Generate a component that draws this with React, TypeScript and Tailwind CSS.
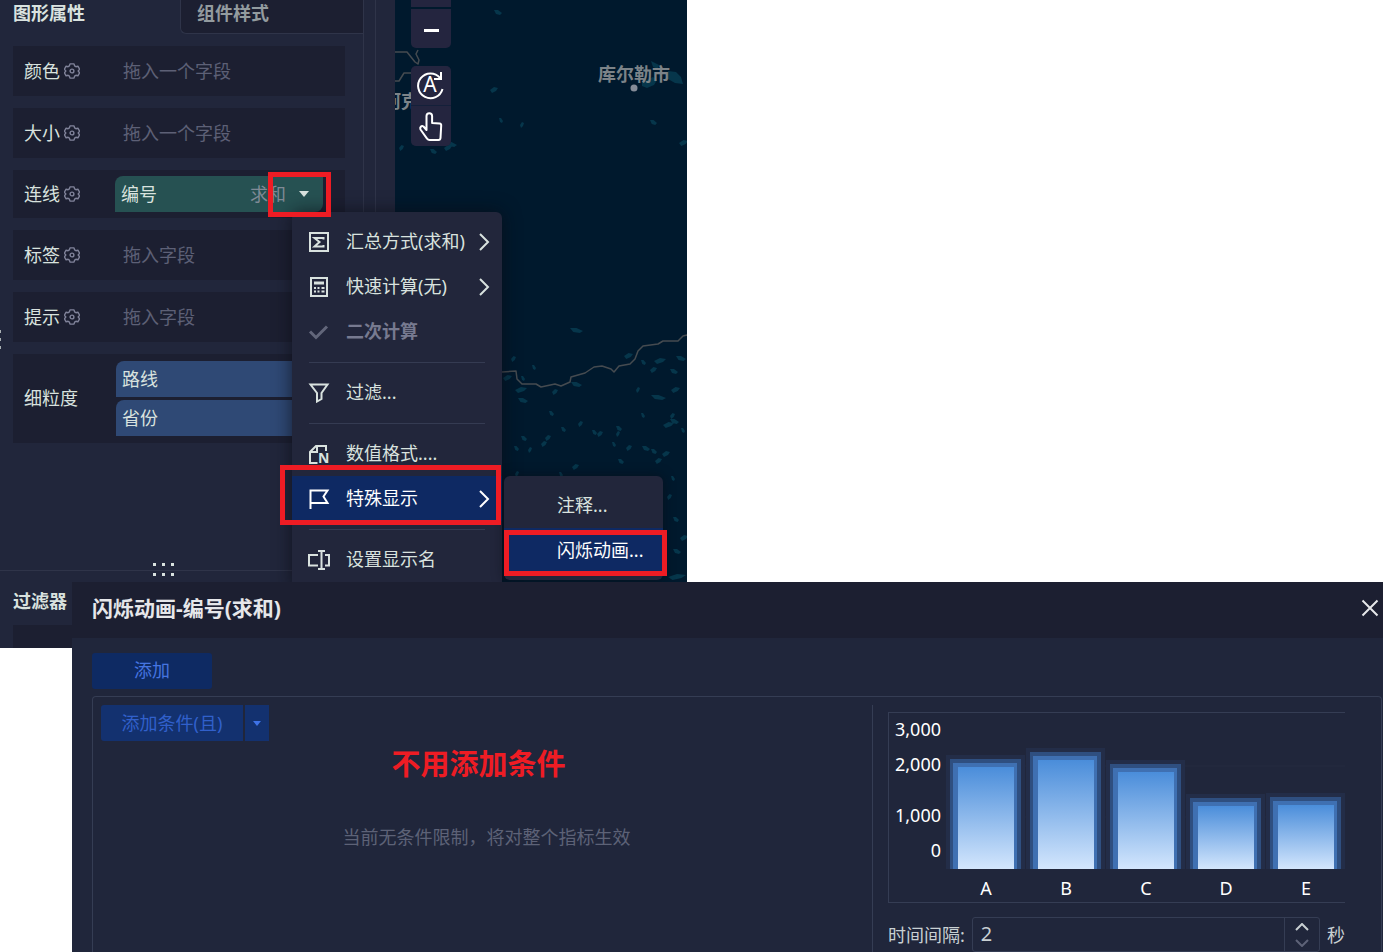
import type { ReactNode } from "react";

const shapeFields = [
  { label: "颜色", hint: "拖入一个字段" },
  { label: "大小", hint: "拖入一个字段" },
];

const textFields = [
  { label: "标签", hint: "拖入字段" },
  { label: "提示", hint: "拖入字段" },
];

const bars = [
  { name: "A", height: 102 },
  { name: "B", height: 109 },
  { name: "C", height: 97 },
  { name: "D", height: 63 },
  { name: "E", height: 64 },
];

const axisLabels = [
  { text: "3,000", y: 23 },
  { text: "2,000", y: 58 },
  { text: "1,000", y: 109 },
  { text: "0", y: 144 },
];

// small lakes scattered over the basin: x, y, width
const lakes = [
  [494, 12, 8], [490, 89, 8], [499, 120, 4], [520, 124, 4], [446, 144, 11],
  [444, 147, 8], [430, 151, 7], [399, 147, 5], [650, 122, 7], [679, 142, 9],
  [570, 330, 13], [511, 358, 5], [532, 367, 4], [503, 377, 9], [521, 378, 4],
  [515, 389, 12], [518, 400, 10], [552, 391, 6], [571, 384, 11], [624, 355, 9],
  [641, 362, 5], [654, 360, 12], [676, 358, 10], [650, 369, 7], [670, 371, 8],
  [636, 389, 4], [651, 397, 15], [671, 389, 9], [641, 415, 4], [663, 424, 11],
  [670, 421, 9], [670, 415, 5], [549, 413, 5], [578, 423, 5], [561, 429, 5],
  [545, 437, 6], [521, 438, 6], [541, 443, 6], [514, 448, 5], [528, 449, 4],
  [592, 432, 5], [597, 433, 6], [616, 428, 6], [616, 433, 4], [612, 444, 4],
  [626, 447, 6], [642, 448, 8], [662, 453, 8], [651, 451, 6], [655, 460, 7],
  [618, 461, 6], [572, 466, 7], [559, 474, 4], [515, 473, 4], [671, 478, 4],
  [667, 496, 5], [673, 519, 6], [680, 537, 8], [673, 551, 8], [668, 576, 18],
  [681, 430, 4],
];

const Gear = () => (
  <svg className="size-4 shrink-0" viewBox="0 0 16 16" fill="none" stroke="#80839a" strokeWidth="1.4" strokeLinejoin="round">
    <path d="M6 .9h4l.6 2 1.300.8 2-.5 1.700 2.900-1.400 1.900 1.400 1.900-1.700 2.900-2-.5-1.300.8-.6 2H6l-.6-2-1.300-.8-2 .5L.400 9.900 1.800 8 .400 6.100l1.700-2.900 2 .5 1.300-.8z" />
    <circle cx="8" cy="8" r="1.900" />
  </svg>
);

const Chevron = () => (
  <svg className="h-5 w-3 shrink-0" viewBox="0 0 12 20" fill="none" stroke="currentColor" strokeWidth="2">
    <path d="M2 2l8 8-8 8" />
  </svg>
);

const FieldCard = ({ label, gear = true, children }: { label: string; gear?: boolean; children: ReactNode }) => (
  <div className="grid grid-cols-[102px_1fr] items-center bg-[#1c1f31]">
    <div className="flex items-center gap-1 pb-px pl-[11px] text-[#d9e2df]">
      {label}
      {gear && <Gear />}
    </div>
    {children}
  </div>
);

const Hint = ({ text }: { text: string }) => (
  <div className="flex h-[50px] items-center pb-px pl-2 text-[#5d6076]">{text}</div>
);

const Frame = ({ className }: { className: string }) => (
  <div className={`pointer-events-none absolute border-[5px] border-[#ee1c24] ${className}`} />
);

const PropertyPanel = () => (
  <aside className="relative flex w-[363px] shrink-0 flex-col">
    <div className="flex h-[34px]">
      <button className="w-[180px] pb-2 pl-[13px] text-left leading-[26px] font-bold text-[#d9e2df]">图形属性</button>
      <button className="flex-1 rounded-bl-md border-b border-l border-[#2f3449] bg-[#1c1f31] pb-2 pl-4 text-left leading-[26px] font-bold text-[#939b9f]">
        组件样式
      </button>
    </div>
    <div className="flex flex-col gap-3 pt-3 pr-[18px] pl-[13px]">
      {shapeFields.map((f) => (
        <FieldCard key={f.label} label={f.label}>
          <Hint text={f.hint} />
        </FieldCard>
      ))}
      <FieldCard label="连线">
        <div className="my-1.5 mr-[22px] flex h-9 items-center rounded-tl-lg rounded-br-lg bg-[#265152] pr-[13px] pl-1.5 text-[#d9e2df]">
          <span className="flex-1">编号</span>
          <span className="text-[#7f8a96]">求和</span>
          <button className="ml-3 flex size-3 items-center justify-center" aria-label="编号选项">
            <svg className="h-1.5 w-2.5" viewBox="0 0 10 6" fill="currentColor">
              <path d="M0 0h10L5 6z" />
            </svg>
          </button>
        </div>
      </FieldCard>
      {textFields.map((f) => (
        <FieldCard key={f.label} label={f.label}>
          <Hint text={f.hint} />
        </FieldCard>
      ))}
      <FieldCard label="细粒度" gear={false}>
        <div className="my-[7px] mr-[21px] ml-px flex flex-col gap-[3px] text-[#d9e2df]">
          {["路线", "省份"].map((name) => (
            <div key={name} className="flex h-9 items-center rounded-tl-lg rounded-br-lg bg-[#2f4975] pl-1.5">
              {name}
            </div>
          ))}
        </div>
      </FieldCard>
    </div>
    <section className="relative mt-auto flex h-[78px] flex-col border-t border-[#2f3449] pl-[13px]">
      <div className="absolute -top-2 left-[153px] grid grid-cols-3 gap-x-[6px] gap-y-[7px] text-[#d9e2df]">
        {[0, 1, 2, 3, 4, 5].map((i) => (
          <i key={i} className="size-[3px] bg-current" />
        ))}
      </div>
      <h2 className="pt-[17px] leading-[26px] font-bold text-[#d9e2df]">过滤器</h2>
      <div className="mt-auto mr-[18px] h-[23px] bg-[#1c1f31]" />
    </section>
    <div className="absolute top-[330px] left-0 grid gap-[5px]">
      <i className="h-[3px] w-px bg-[#a9b0b3]" />
      <i className="h-[3px] w-px bg-[#a9b0b3]" />
      <i className="h-[3px] w-px bg-[#a9b0b3]" />
    </div>
  </aside>
);

const MapView = () => (
  <div className="relative flex-1 overflow-hidden bg-[#00192d]">
    <svg className="absolute inset-0 size-full" aria-hidden="true">
      <g transform="translate(-395 0)">
        <g fill="#06364b">
          {lakes.map(([x, y, w], i) => (
            <path
              key={i}
              d={
                i % 2
                  ? `M${x} ${y + 1}l${w / 2}-3 ${w / 2} 1-${w / 4} 3-${w / 2} 2z`
                  : `M${x} ${y - 2}l${w / 2} 0 ${w / 2} 3-${w / 4} 2-${w / 2}-1z`
              }
            />
          ))}
          <path d="M651 61l8 4-1 4-5-2zM668 71l8 1 5 5 2 7-8-1-7-4zM642 82l11-5 4 3-3 5-7 3-5-2z" />
        </g>
        <g fill="none" stroke="#454b50" strokeWidth="1.500" strokeLinejoin="round">
          <path d="M395 52h12l8 10 3 2 1-4-3-6 2-4M395 81h4l5-8h7" />
          <path d="M502 372l14-1 1 8 5 5h14l5 3 14-3 6 2 9-4 1-5 14-4 9-6 8-1 9 3 3 3 5-6 11-2 5-5 3-8 5-5 15-2 5-3h15l5-5 4-1 4 4" />
        </g>
        <g fill="#7c8388" fontSize="18" fontWeight="700">
          <text x="383" y="108">阿克</text>
          <text x="598" y="81">库尔勒市</text>
        </g>
        <circle cx="634" cy="88" r="3.500" fill="#858c98" />
      </g>
    </svg>
    <div className="absolute top-0 left-4 flex w-10 flex-col gap-[18px] text-white">
      <div className="flex flex-col gap-0.5">
        <button className="h-[7px] bg-[#24253f]" aria-label="放大" />
        <button className="flex h-[39px] items-center justify-center rounded-b-[5px] bg-[#24253f] pt-1" aria-label="缩小">
          <i className="h-[3px] w-[15px] bg-white" />
        </button>
      </div>
      <div className="flex flex-col gap-px rounded-[5px] bg-[#14203a]">
        <button className="h-[39px] rounded-t-[5px] bg-[#24253f]" aria-label="自动刷新">
          <svg viewBox="0 0 40 39" className="size-full" fill="none" stroke="currentColor" strokeWidth="2">
            <path d="M31.500 23A12.400 12.400 0 1 1 29 11.800M30 6v7h-7" />
            <text x="19" y="26" textAnchor="middle" fontSize="21" fill="currentColor" strokeWidth="0">A</text>
          </svg>
        </button>
        <button className="h-10 rounded-b-[5px] bg-[#24253f]" aria-label="平移">
          <svg viewBox="0 0 40 40" className="size-full" fill="none" stroke="currentColor" strokeWidth="2" strokeLinejoin="round">
            <path d="M15.500 24V10a2.800 2.800 0 0 1 5.600 0V17l7.500.500q1.700.200 1.600 2L29.500 32q-.200 2-2 2H18.500q-1.500 0-2.300-1.200L9.500 23.500c-1-2 .800-4.300 3-3z" />
          </svg>
        </button>
      </div>
    </div>
  </div>
);

const Icon = ({ children }: { children: ReactNode }) => (
  <svg className="h-5 w-[22px] shrink-0" viewBox="0 0 22 20" fill="none" stroke="currentColor" strokeWidth="2">
    {children}
  </svg>
);

const MenuItem = ({ icon, text, more, className = "text-[#d9e2df]" }: { icon: ReactNode; text: string; more?: boolean; className?: string }) => (
  <button className={`flex h-[45px] w-full items-center pr-3 pl-4 text-left ${className}`}>
    <Icon>{icon}</Icon>
    <span className="flex-1 pb-px pl-4 whitespace-nowrap">{text}</span>
    {more && <Chevron />}
  </button>
);

const Separator = () => <hr className="mx-[17px] mt-2 mb-[7px] border-[#353b52]" />;

const FieldMenu = () => (
  <div className="absolute top-[212px] left-[292px] w-[210px] rounded-md bg-[#22263b] pt-[7px] pb-2 shadow-[0_0_18px_rgba(10,12,20,0.7)]">
    <MenuItem
      more
      text="汇总方式(求和)"
      icon={
        <>
          <path d="M2 1h18v18H2z" />
          <path d="M15.500 7.500V6h-9l5 4-5 4.500h9V13" />
        </>
      }
    />
    <MenuItem
      more
      text="快速计算(无)"
      icon={
        <>
          <path d="M3 1h16v18H3z" />
          <path d="M6 6h10" strokeWidth="3" />
          <path d="M6 11h2m1.500 0h2M6 14.500h2m1.500 0h2m2 0h3M13.500 11h3" />
        </>
      }
    />
    <MenuItem text="二次计算" className="font-bold text-[#777a90]" icon={<path d="M2 9.500l6 6L19 4.500" strokeWidth="3" stroke="#62667a" />} />
    <Separator />
    <MenuItem text="过滤..." icon={<path d="M2.500 1.500h17L13.500 10v6L9 18.500V10z" />} />
    <Separator />
    <MenuItem
      text="数值格式...."
      icon={
        <>
          <path d="M9.500 19H2V8l6-6h10v5M9 2v6H2" />
          <text x="10" y="19" fontSize="14" fontWeight="700" fill="currentColor" strokeWidth="0">N</text>
        </>
      }
    />
    <MenuItem more text="特殊显示" className="bg-[#0e2963] text-white" icon={<path d="M2.500 20V1.500h17l-4 6 4 6.500h-17" />} />
    <Separator />
    <MenuItem text="设置显示名" icon={<path d="M10 5H1v10.500h9M17 5h4v10.500h-4M10 1h7M10 19h7M13.500 1v18" />} />
  </div>
);

const SubMenu = () => (
  <div className="absolute top-[476px] left-[504px] w-[159px] rounded-md bg-[#22263b] py-[7px] shadow-[0_0_12px_rgba(10,12,20,0.6)]">
    <button className="h-[45px] w-full pb-px pl-[53px] text-left text-[#d9e2df]">注释...</button>
    <button className="h-[45px] w-full bg-[#0e2963] pb-px pl-[53px] text-left text-white">闪烁动画...</button>
  </div>
);

const PreviewChart = () => (
  <svg className="block w-full" viewBox="0 0 456 189" fill="#fff" fontSize="18">
    <defs>
      <linearGradient id="bar" x1="0" y1="0" x2="0" y2="1">
        <stop offset="0" stopColor="#4a8dda" />
        <stop offset="1" stopColor="#d3e6fd" />
      </linearGradient>
    </defs>
    <path d="M57 104h399M57 53h399" stroke="#242a41" />
    {axisLabels.map((l) => (
      <text key={l.text} x="52" y={l.y} textAnchor="end">{l.text}</text>
    ))}
    {bars.map((b, i) => {
      const x = 69 + i * 80;
      const y = 156 - b.height;
      return (
        <g key={b.name}>
          <rect x={x - 12} y={y - 12} width="79" height={b.height + 12} fill="#232d48" />
          <rect x={x - 8} y={y - 8} width="71" height={b.height + 8} fill="#2f4f80" />
          <rect x={x - 5} y={y - 4} width="64" height={b.height + 4} fill="#3f70b2" />
          <rect x={x} y={y} width="56" height={b.height} fill="url(#bar)" />
          <text x={x + 28} y="182" textAnchor="middle">{b.name}</text>
        </g>
      );
    })}
  </svg>
);

const AnimationDialog = () => (
  <div role="dialog" aria-labelledby="dialog-title" className="relative -mt-[66px] ml-[72px] flex flex-1 flex-col bg-[#20263b]">
    <header className="flex h-14 items-center justify-between bg-[#1c1f31] pr-1 pl-5">
      <h1 id="dialog-title" className="pb-1 text-[21px] font-bold text-[#e6e7ea]">闪烁动画-编号(求和)</h1>
      <button aria-label="关闭" className="pb-1">
        <svg className="size-[18px]" viewBox="0 0 18 18" fill="none" stroke="#e6e7ea" strokeWidth="2">
          <path d="M1.500 1.500l15 15M16.500 1.500l-15 15" />
        </svg>
      </button>
    </header>
    <div className="flex flex-1 flex-col pt-[15px] pr-px pl-5">
      <button className="h-9 w-[120px] rounded-[3px] bg-[#0e2a63] pb-0.5 text-[#4675e0]">添加</button>
      <div className="mt-[7px] flex flex-1 rounded-t border border-b-0 border-[#353d54] pt-2 pl-2">
        <div className="flex-1">
          <div className="flex gap-0.5 text-[#3160cb]">
            <button className="h-9 w-[142px] rounded-l-[3px] bg-[#13316f]">添加条件(且)</button>
            <button className="flex h-9 w-6 items-center justify-center bg-[#13316f]" aria-label="更多条件">
              <svg className="h-[5px] w-2" viewBox="0 0 8 5" fill="#3f72e6">
                <path d="M0 0h8L4 5z" />
              </svg>
            </button>
          </div>
          <p className="pt-[3px] pr-4 text-center text-[29px] leading-10 font-bold text-[#ee1c24]">不用添加条件</p>
          <p className="pt-10 text-center text-[#5d6277]">当前无条件限制，将对整个指标生效</p>
        </div>
        <div className="w-[509px] shrink-0 border-l border-[#353d54] pt-[7px] pr-9 pl-[15px]">
          <div className="border-y border-l border-[#353d54]">
            <PreviewChart />
          </div>
          <div className="mt-[14px] flex h-[35px] items-center gap-[7px] text-[#c9d0d3]">
            <label htmlFor="interval" className="whitespace-nowrap">时间间隔:</label>
            <div className="flex h-full min-w-0 flex-1 rounded-[3px] border border-[#353d54]">
              <input id="interval" inputMode="numeric" defaultValue="2" className="min-w-0 flex-1 bg-transparent pb-0.5 pl-2 text-[20px] outline-none" />
              <div className="flex w-[35px] flex-col items-center justify-center gap-2 border-l border-[#353d54]">
                <button aria-label="增加">
                  <svg className="block h-2 w-[14px]" viewBox="0 0 14 8" fill="none" stroke="currentColor" strokeWidth="2">
                    <path d="M1 7l6-6 6 6" />
                  </svg>
                </button>
                <button aria-label="减少">
                  <svg className="block h-2 w-[14px]" viewBox="0 0 14 8" fill="none" stroke="#5d6277" strokeWidth="2">
                    <path d="M1 1l6 6 6-6" />
                  </svg>
                </button>
              </div>
            </div>
            <span>秒</span>
          </div>
        </div>
      </div>
    </div>
  </div>
);

const App = () => {
  return (
    <div className="flex min-h-screen flex-col bg-white font-['Noto_Sans','Noto_Sans_CJK_SC',sans-serif] text-[18px] leading-[26px]">
      <main className="relative mr-[696px] flex min-h-[648px] bg-[#21263b]">
        <PropertyPanel />
        <div className="w-3 shrink-0 border-l border-[#2f3449]" />
        <div className="w-5 shrink-0 border-l border-[#2f3449]" />
        <MapView />
        <FieldMenu />
        <SubMenu />
        <Frame className="top-[172px] left-[268px] h-[45px] w-[63px]" />
        <Frame className="top-[465px] left-[280px] h-[60px] w-[221px]" />
        <Frame className="top-[530px] left-[504px] h-[46px] w-[163px]" />
      </main>
      <AnimationDialog />
    </div>
  );
};

export default App;
